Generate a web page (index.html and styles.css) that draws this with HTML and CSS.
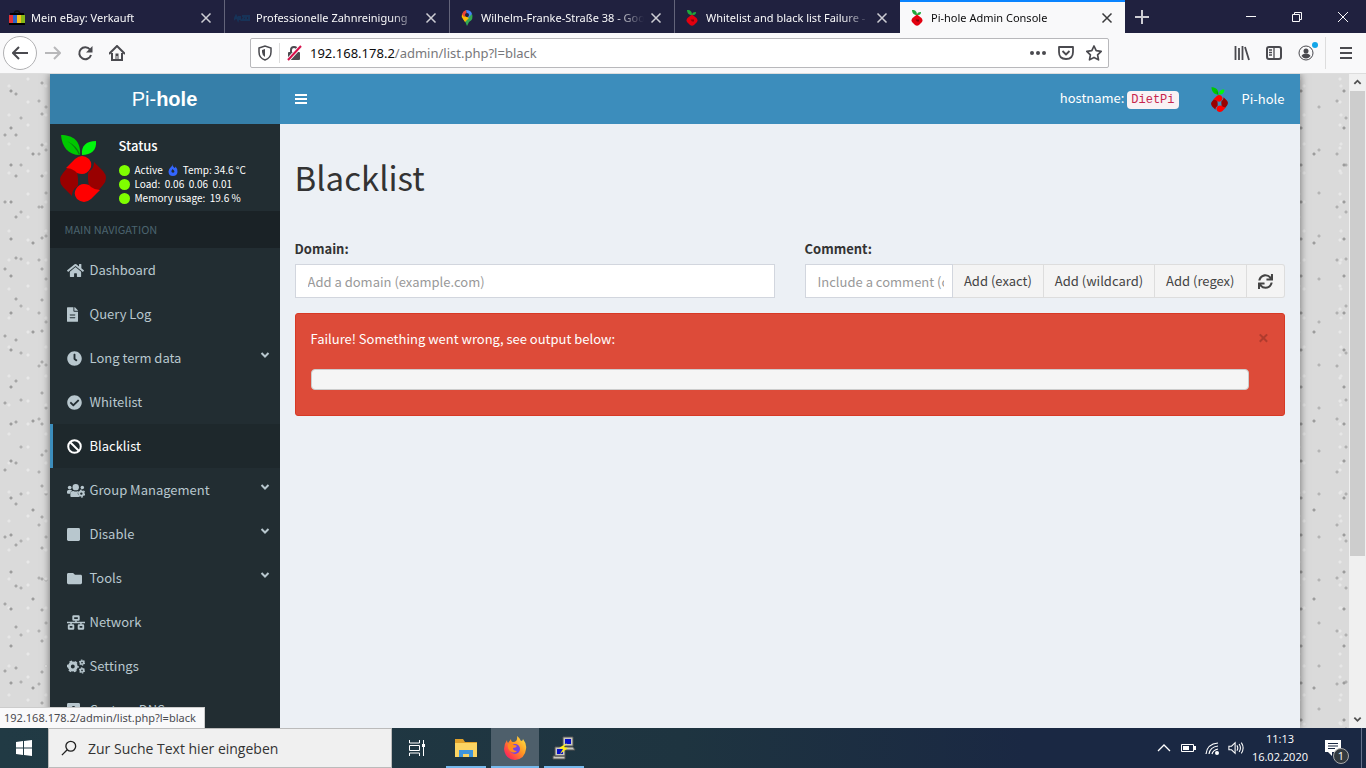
FILE: index.html
```
<!DOCTYPE html>
<html lang="en">
<head>
    <meta charset="UTF-8">
    <meta name="viewport" content="width=device-width, initial-scale=1.0">
    <title>Pi-hole Admin Console</title>
    <link rel="stylesheet" href="styles.css">
</head>
<body>
    <!-- icon sprite -->
    <svg class="sprite" aria-hidden="true">
        <symbol id="pihole" viewBox="0 0 46 68">
            <path fill="#00c800" d="M1 1C13 1 21 7 20 21C8 21 2 13 1 1z"/>
            <path fill="#0a7a12" d="M7 7Q15 12 19 21L20 20Q17 12 7 7z"/>
            <path fill="#00f50c" d="M36 7C37 16 31 21 22 21C21 12 26 7 36 7z"/>
            <g transform="translate(23 45)">
                <path fill="#990000" d="M-11 17L-20 8Q-26 1 -20 -6L-15 -12L-6 -8L-5 0L-5 5Q-5 8 -8 9Q-11 12 -11 17z"/>
                <path fill="#990000" d="M-11 17L-20 8Q-26 1 -20 -6L-15 -12L-6 -8L-5 0L-5 5Q-5 8 -8 9Q-11 12 -11 17z" transform="rotate(180)"/>
                <path fill="#ff0000" d="M-17 -11L-8 -20Q-1 -26 6 -20Q10 -15 7 -10Q4 -5 -1 -5Q-6 -5 -8 -8Q-12 -11 -17 -11z"/>
                <path fill="#ff0000" d="M-17 -11L-8 -20Q-1 -26 6 -20Q10 -15 7 -10Q4 -5 -1 -5Q-6 -5 -8 -8Q-12 -11 -17 -11z" transform="rotate(180)"/>
            </g>
        </symbol>
        <symbol id="pihole-small" viewBox="0 0 16 16">
            <path fill="#1fa83a" d="M3 0C7 0 8 2 8 5C5 5 3 3 3 0zM12 2C12 5 10 5 8 5C8 3 9 2 12 2z"/>
            <path fill="#e3000f" d="M8 4.500L12.500 8Q14.500 10.500 12.500 12.500L10 15Q8 16.500 6 15L3.500 12.500Q1.500 10.500 3.500 8z"/>
            <path fill="#8a0008" d="M6.500 9.500h3.500v2H8z"/>
        </symbol>
        <symbol id="close" viewBox="0 0 12 12"><path d="M1.500 1.500l9 9M10.500 1.500l-9 9" fill="none" stroke="currentColor" stroke-width="1.500"/></symbol>
        <symbol id="chevron" viewBox="0 0 10 10"><path d="M1.500 3l3.500 3.500L8.500 3" fill="none" stroke="currentColor" stroke-width="2"/></symbol>
        <symbol id="home" viewBox="0 0 576 512"><path fill="currentColor" d="M280.37 148.26L96 300.11V464a16 16 0 0 0 16 16l112.06-.29a16 16 0 0 0 15.92-16V368a16 16 0 0 1 16-16h64a16 16 0 0 1 16 16v95.64a16 16 0 0 0 16 16.05L464 480a16 16 0 0 0 16-16V300L295.67 148.26a12.19 12.19 0 0 0-15.3 0zM571.6 251.47L488 182.56V44.05a12 12 0 0 0-12-12h-56a12 12 0 0 0-12 12v72.61L318.47 43a48 48 0 0 0-61 0L4.34 251.47a12 12 0 0 0-1.6 16.9l25.5 31A12 12 0 0 0 45.15 301l235.22-193.74a12.19 12.19 0 0 1 15.3 0L530.9 301a12 12 0 0 0 16.9-1.6l25.5-31a12 12 0 0 0-1.700-16.93z"/></symbol>
        <symbol id="file" viewBox="0 0 384 512"><path fill="currentColor" d="M224 136V0H24C10.700 0 0 10.700 0 24v464c0 13.300 10.700 24 24 24h336c13.300 0 24-10.700 24-24V160H248c-13.200 0-24-10.800-24-24zm64 236c0 6.600-5.400 12-12 12H108c-6.600 0-12-5.400-12-12v-8c0-6.600 5.400-12 12-12h168c6.600 0 12 5.400 12 12v8zm0-96c0 6.600-5.400 12-12 12H108c-6.600 0-12-5.400-12-12v-8c0-6.600 5.400-12 12-12h168c6.600 0 12 5.400 12 12v8zM384 122v6H256V0h6c6.400 0 12.500 2.500 17 7l98 98c4.500 4.500 7 10.600 7 17z"/></symbol>
        <symbol id="clock" viewBox="0 0 512 512"><path fill="currentColor" d="M256,8C119,8,8,119,8,256S119,504,256,504,504,393,504,256,393,8,256,8Zm92.49,313h0l-20,25a16,16,0,0,1-22.49,2.500h0l-67-49.720a40,40,0,0,1-15-31.230V112a16,16,0,0,1,16-16h32a16,16,0,0,1,16,16V256l58,42.500A16,16,0,0,1,348.490,321Z"/></symbol>
        <symbol id="check" viewBox="0 0 512 512"><path fill="currentColor" d="M504 256c0 136.967-111.033 248-248 248S8 392.967 8 256 119.033 8 256 8s248 111.033 248 248zM227.314 387.314l184-184c6.248-6.248 6.248-16.379 0-22.627l-22.627-22.627c-6.248-6.249-16.379-6.249-22.628 0L216 308.118l-70.059-70.059c-6.248-6.248-16.379-6.248-22.628 0l-22.627 22.627c-6.248 6.248-6.248 16.379 0 22.627l104 104c6.249 6.249 16.379 6.249 22.628.001z"/></symbol>
        <symbol id="ban" viewBox="0 0 512 512"><g fill="none" stroke="currentColor" stroke-width="68"><circle cx="256" cy="256" r="214"/><path d="M110 110l292 292"/></g></symbol>
        <symbol id="users" viewBox="0 0 640 512">
            <g fill="currentColor"><circle cx="96" cy="150" r="66"/><circle cx="544" cy="150" r="62"/><circle cx="310" cy="136" r="114"/>
            <path d="M0 340v-50q0-56 56-56h84q30 0 46 18q-70 30-78 120H32q-32 0-32-32zM120 448v-70q0-100 106-108q86 36 172 0q-50 90 4 160l40 60H176q-56 0-56-42z"/></g>
            <circle cx="510" cy="366" r="76" fill="none" stroke="currentColor" stroke-width="66"/>
            <circle cx="510" cy="366" r="122" fill="none" stroke="currentColor" stroke-width="44" stroke-dasharray="66 61"/>
        </symbol>
        <symbol id="square" viewBox="0 0 448 512"><rect y="32" width="448" height="448" rx="48" fill="currentColor"/></symbol>
        <symbol id="folder" viewBox="0 0 512 512"><path fill="currentColor" d="M464 128H272l-64-64H48C21.490 64 0 85.490 0 112v288c0 26.510 21.490 48 48 48h416c26.510 0 48-21.490 48-48V176c0-26.510-21.490-48-48-48z"/></symbol>
        <symbol id="network" viewBox="0 0 640 512"><g fill="none" stroke="currentColor" stroke-width="66"><rect x="222" y="33" width="196" height="130" rx="10"/><rect x="62" y="350" width="164" height="128" rx="10"/><rect x="414" y="350" width="164" height="128" rx="10"/></g><path fill="none" stroke="currentColor" stroke-width="56" d="M0 256h640M320 176v80M144 256v80M496 256v80"/></symbol>
        <symbol id="cogs" viewBox="0 0 640 512">
            <g fill="none" stroke="currentColor"><circle cx="206" cy="256" r="122" stroke-width="104"/><circle cx="206" cy="256" r="184" stroke-width="56" stroke-dasharray="96 96.700" stroke-dashoffset="48"/>
            <circle cx="534" cy="116" r="58" stroke-width="56"/><circle cx="534" cy="116" r="92" stroke-width="36" stroke-dasharray="52 44"/>
            <circle cx="534" cy="396" r="58" stroke-width="56"/><circle cx="534" cy="396" r="92" stroke-width="36" stroke-dasharray="52 44"/></g>
        </symbol>
        <symbol id="book" viewBox="0 0 448 512"><path fill="currentColor" fill-rule="evenodd" d="M48 0h352q48 0 48 48v416q0 48-48 48H48q-48 0-48-48V48Q0 0 48 0zM224 100a70 70 0 1 0 1 0zM100 370q0-80 70-80h108q70 0 70 80z"/></symbol>
        <symbol id="sync" viewBox="0 0 512 512"><path fill="currentColor" d="M440.650 12.570l4 82.770A247.160 247.160 0 0 0 255.830 8C134.730 8 33.910 94.920 12.290 209.820A12 12 0 0 0 24.090 224h49.050a12 12 0 0 0 11.670-9.260 175.910 175.910 0 0 1 317-56.940l-101.460-4.860a12 12 0 0 0-12.570 12v47.410a12 12 0 0 0 12 12H500a12 12 0 0 0 12-12V12a12 12 0 0 0-12-12h-47.370a12 12 0 0 0-11.980 12.570zM255.830 432a175.610 175.610 0 0 1-146-77.800l101.800 4.870a12 12 0 0 0 12.570-12v-47.400a12 12 0 0 0-12-12H12a12 12 0 0 0-12 12V500a12 12 0 0 0 12 12h47.350a12 12 0 0 0 12-12.600l-4.150-82.570A247.170 247.170 0 0 0 255.830 504c121.110 0 221.930-86.920 243.550-201.820a12 12 0 0 0-11.800-14.180h-49.050a12 12 0 0 0-11.670 9.260A175.860 175.860 0 0 1 255.830 432z"/></symbol>
        <symbol id="flame" viewBox="0 0 10 12"><path fill="#3366ff" fill-rule="evenodd" d="M4.500 0Q4 2 6.500 4Q7.500 3.500 7.500 2.500Q10 5 9.500 8Q9 12 5 12Q.5 12 .5 7.500Q.5 5 3 3Q4.500 2 4.500 0zM4.500 5Q3 7 3.500 8Q5 9.500 6.500 8Q6.500 6.500 4.500 5z"/></symbol>
    </svg>

    <header class="tabs">
        <div class="tab">
            <svg class="favicon" viewBox="0 0 16 16"><path fill="none" stroke="#111" stroke-width="1.500" d="M5 5Q5 1 8 1T11 5"/><path fill="#000" d="M1 3h14v3H1z"/><path fill="#e43137" d="M0 5h4v8H0z"/><path fill="#2b63c6" d="M4 5h4v8H4z"/><path fill="#f4c21f" d="M8 5h4v8H8z"/><path fill="#86b817" d="M12 5h4v8h-4z"/><path d="M0 13h16v2H0z"/></svg>
            <span class="tab-title">Mein eBay: Verkauft</span>
            <button class="tab-close" aria-label="Close tab"><svg><use href="#close"/></svg></button>
        </div>
        <div class="tab">
            <svg class="favicon" viewBox="0 0 16 16"><path fill="none" stroke="#173358" stroke-width="2" d="M0 10l2-4l2 4l1-4M6 6v4M8 6h3l-3 4h3M12 6h3v4h-3z"/></svg>
            <span class="tab-title">Professionelle Zahnreinigung</span>
            <button class="tab-close" aria-label="Close tab"><svg><use href="#close"/></svg></button>
        </div>
        <div class="tab">
            <svg class="favicon" viewBox="0 0 16 16"><path fill="#34a853" d="M8 16Q7 12 4 9L13 4Q15 9 10 12Q9 14 8 16z"/><path fill="#fbbc04" d="M4 9Q2 7 3 4L10 8L6 12z"/><path fill="#ea4335" d="M3 4Q4 1 7 0L8 5L5 7z"/><path fill="#4285f4" d="M7 0Q12 0 13 4L9 8z"/><circle cx="8" cy="5" r="2" fill="#20213f"/></svg>
            <span class="tab-title">Wilhelm-Franke-Straße 38 - Goo</span>
            <button class="tab-close" aria-label="Close tab"><svg><use href="#close"/></svg></button>
        </div>
        <div class="tab">
            <svg class="favicon"><use href="#pihole-small"/></svg>
            <span class="tab-title">Whitelist and black list Failure -</span>
            <button class="tab-close" aria-label="Close tab"><svg><use href="#close"/></svg></button>
        </div>
        <div class="tab active">
            <svg class="favicon"><use href="#pihole-small"/></svg>
            <span class="tab-title">Pi-hole Admin Console</span>
            <button class="tab-close" aria-label="Close tab"><svg><use href="#close"/></svg></button>
        </div>
        <button class="new-tab" aria-label="New tab"><svg viewBox="0 0 14 14"><path d="M7 0v14M0 7h14" stroke="currentColor" stroke-width="2"/></svg></button>
        <div class="window-controls">
            <button aria-label="Minimize"><svg viewBox="0 0 12 12"><path d="M1 5.500h10" stroke="currentColor"/></svg></button>
            <button aria-label="Restore"><svg viewBox="0 0 12 12"><path d="M1.500 3.500h7v7h-7zM3.500 3.500v-2h7v7h-2" fill="none" stroke="currentColor"/></svg></button>
            <button aria-label="Close window"><svg viewBox="0 0 12 12"><path d="M1 1l10 10M11 1L1 11" stroke="currentColor"/></svg></button>
        </div>
    </header>

    <div class="toolbar">
        <div class="nav-buttons">
            <button class="back" aria-label="Back"><svg viewBox="0 0 16 16"><path d="M16 8H1M7 2L1 8l6 6" fill="none" stroke="currentColor" stroke-width="2"/></svg></button>
            <button class="forward" aria-label="Forward"><svg viewBox="0 0 16 16"><path d="M0 8h15M9 2l6 6l-6 6" fill="none" stroke="currentColor" stroke-width="2"/></svg></button>
            <button aria-label="Reload"><svg viewBox="0 0 16 16"><path d="M13 4.500A6 6 0 1 0 14 10" fill="none" stroke="currentColor" stroke-width="2"/><path d="M15.500 1v6.500H9z" fill="currentColor"/></svg></button>
            <button aria-label="Home"><svg viewBox="0 0 16 16"><path d="M0 9l8-8l8 8M3 8v7h10V8" fill="none" stroke="currentColor" stroke-width="2"/><path d="M6.500 8.500h3V15H8.500v-4h-1v4h-1z" fill="currentColor"/></svg></button>
        </div>
        <div class="url-bar">
            <svg viewBox="0 0 16 16"><path d="M2 3l6-2l6 2v4q0 6-6 8q-6-2-6-8z" fill="none" stroke="currentColor" stroke-width="1.500"/><path d="M8 4v8q-3-2-3-5V5z" fill="currentColor"/></svg>
            <span class="url-divider"></span>
            <svg viewBox="0 0 16 16"><path d="M5 8V5q0-3 3-3t3 3v3" fill="none" stroke="currentColor" stroke-width="2"/><path fill="currentColor" d="M3 7h10q1 0 1 1v6q0 1-1 1H3q-1 0-1-1V8q0-1 1-1z"/><path d="M2 15L15 1" stroke="#f9f9fa" stroke-width="4"/><path d="M2 15L15 1" stroke="#d70f4a" stroke-width="2"/></svg>
            <a class="url" href="#"><b>192.168.178.2</b>/admin/list.php?l=black</a>
            <div class="page-actions">
                <button aria-label="Page actions"><svg viewBox="0 0 16 16" fill="currentColor"><circle cx="2" cy="8" r="2"/><circle cx="8" cy="8" r="2"/><circle cx="14" cy="8" r="2"/></svg></button>
                <button aria-label="Save to Pocket"><svg viewBox="0 0 16 16"><path d="M1 2h14v5q0 7-7 7t-7-7zM4.500 6L8 9.500L11.500 6" fill="none" stroke="currentColor" stroke-width="1.800" stroke-linejoin="round"/></svg></button>
                <button aria-label="Bookmark"><svg viewBox="0 0 16 16"><path d="M8 1l2.200 4.600l5 .7l-3.600 3.500l.9 5L8 12.400l-4.500 2.400l.9-5L.8 6.300l5-.7z" fill="none" stroke="currentColor" stroke-width="1.700" stroke-linejoin="round"/></svg></button>
            </div>
        </div>
        <div class="browser-menu">
            <button aria-label="Library"><svg viewBox="0 0 16 16"><path d="M1.500 1v14M5 3v12M8.500 1v14M11 2l4 13" fill="none" stroke="currentColor" stroke-width="1.800"/></svg></button>
            <button aria-label="Sidebars"><svg viewBox="0 0 16 16"><rect x="1" y="2" width="14" height="12" rx="2" fill="none" stroke="currentColor" stroke-width="2"/><path d="M8 2v12M3 5h3M3 7.500h3M3 10h3" stroke="currentColor" stroke-width="1.300"/></svg></button>
            <button class="account" aria-label="Account"><svg viewBox="0 0 16 16"><circle cx="8" cy="8" r="7" fill="none" stroke="currentColor"/><circle cx="8" cy="6" r="2.500" fill="currentColor"/><path fill="currentColor" d="M3.500 11q1-2.500 4.500-2.500t4.500 2.500q-2 2.500-4.500 2.500T3.500 11z"/></svg></button>
            <button class="hamburger" aria-label="Menu"><svg viewBox="0 0 16 16"><path d="M2 3h12M2 8h12M2 13h12" stroke="currentColor" stroke-width="2"/></svg></button>
        </div>
    </div>

    <div class="viewport">
        <div class="page">
            <div class="wrapper">
                <aside class="sidebar">
                    <a class="logo" href="#">Pi-<b>hole</b></a>
                    <div class="user-panel">
                        <svg class="panel-logo"><use href="#pihole"/></svg>
                        <div class="info">
                            <p>Status</p>
                            <div class="stat"><i class="dot"></i>Active <svg class="flame"><use href="#flame"/></svg> Temp: 34.6 °C</div>
                            <div class="stat"><i class="dot"></i>Load:&nbsp; 0.06&nbsp; 0.06&nbsp; 0.01</div>
                            <div class="stat"><i class="dot"></i>Memory usage:&nbsp; 19.6 %</div>
                        </div>
                    </div>
                    <div class="nav-header">MAIN NAVIGATION</div>
                    <nav class="menu">
                        <a href="#"><span class="icon"><svg class="wide"><use href="#home"/></svg></span>Dashboard</a>
                        <a href="#"><span class="icon"><svg class="narrow"><use href="#file"/></svg></span>Query Log</a>
                        <a href="#"><span class="icon"><svg><use href="#clock"/></svg></span>Long term data<svg class="arrow"><use href="#chevron"/></svg></a>
                        <a href="#"><span class="icon"><svg><use href="#check"/></svg></span>Whitelist</a>
                        <a class="active" href="#"><span class="icon"><svg><use href="#ban"/></svg></span>Blacklist</a>
                        <a href="#"><span class="icon"><svg class="wider"><use href="#users"/></svg></span>Group Management<svg class="arrow"><use href="#chevron"/></svg></a>
                        <a href="#"><span class="icon"><svg class="square"><use href="#square"/></svg></span>Disable<svg class="arrow"><use href="#chevron"/></svg></a>
                        <a href="#"><span class="icon"><svg><use href="#folder"/></svg></span>Tools<svg class="arrow"><use href="#chevron"/></svg></a>
                        <a href="#"><span class="icon"><svg class="wider"><use href="#network"/></svg></span>Network</a>
                        <a href="#"><span class="icon"><svg class="wider"><use href="#cogs"/></svg></span>Settings</a>
                        <a href="#"><span class="icon"><svg class="square"><use href="#book"/></svg></span>Custom DNS</a>
                    </nav>
                </aside>
                <main class="main">
                    <div class="navbar">
                        <button class="toggle" aria-label="Toggle navigation"><svg viewBox="0 0 12 12"><path d="M0 2h12M0 6h12M0 10h12" stroke="currentColor" stroke-width="2"/></svg></button>
                        <div class="hostname">hostname: <code>DietPi</code></div>
                        <a class="user" href="#"><svg><use href="#pihole"/></svg>Pi-hole</a>
                    </div>
                    <section class="content">
                        <h1>Blacklist</h1>
                        <form class="row">
                            <div class="field">
                                <label for="domain">Domain:</label>
                                <input id="domain" type="text" placeholder="Add a domain (example.com)">
                            </div>
                            <div class="field">
                                <label for="comment">Comment:</label>
                                <div class="input-group">
                                    <input id="comment" type="text" placeholder="Include a comment (optional)">
                                    <button type="button">Add (exact)</button>
                                    <button type="button">Add (wildcard)</button>
                                    <button type="button">Add (regex)</button>
                                    <button class="refresh" type="button" aria-label="Refresh"><svg><use href="#sync"/></svg></button>
                                </div>
                            </div>
                        </form>
                        <div class="alert">
                            <div class="alert-body">
                                <span>Failure! Something went wrong, see output below:</span>
                                <pre></pre>
                            </div>
                            <button class="alert-close" aria-label="Close">×</button>
                        </div>
                    </section>
                </main>
            </div>
        </div>
        <div class="scrollbar">
            <svg viewBox="0 0 10 10"><path d="M1.500 6.500L5 3l3.500 3.500" fill="none" stroke="currentColor" stroke-width="2"/></svg>
            <div class="track"><div class="thumb"></div></div>
            <svg><use href="#chevron"/></svg>
        </div>
        <div class="status-bubble">192.168.178.2/admin/list.php?l=black</div>
    </div>

    <footer class="taskbar">
        <button class="start" aria-label="Start"><svg viewBox="0 0 16 16" fill="#fff"><path d="M0 2l7-1v6.500H0zM8 1l8-1v7.500H8zM0 8.500h7V15l-7-1zM8 8.500h8V16l-8-1z"/></svg></button>
        <label class="search">
            <svg viewBox="0 0 18 18"><path d="M1 17l6-6" stroke="currentColor" stroke-width="1.500"/><circle cx="11" cy="7" r="5.500" fill="none" stroke="currentColor" stroke-width="1.500"/></svg>
            <input type="text" placeholder="Zur Suche Text hier eingeben" aria-label="Suche">
        </label>
        <button class="task" aria-label="Task view"><svg viewBox="0 0 24 24"><path d="M4.500 4v3h10V4M4.500 20v-3h10v3M4.500 9.500h10v5h-10zM18.500 4v16" fill="none" stroke="#fff"/><path fill="#fff" d="M17 8h3v3h-3z"/></svg></button>
        <button class="task open" aria-label="Explorer"><svg viewBox="0 0 24 24"><path fill="#e0a12a" d="M1 3h8l2 3h12v15H1z"/><path fill="#fcd462" d="M1 7h22v14H1z"/><path fill="#3f95dc" d="M5 21v-7h14v7h-4v-3H9v3z"/></svg></button>
        <button class="task open current" aria-label="Firefox"><svg viewBox="0 0 24 24">
            <defs><linearGradient id="fox" x1="1" y1="0" x2="0" y2="1"><stop offset="0" stop-color="#fff04a"/><stop offset=".45" stop-color="#ff9422"/><stop offset=".8" stop-color="#ff3350"/><stop offset="1" stop-color="#e4188c"/></linearGradient></defs>
            <path fill="url(#fox)" d="M14 0q3 2 4 5q2 0 2-2q4 5 3 10q-1 10-11 11Q2 23 1 13q0-5 3-9q0 2 1 3l3-4q0 3 2 3q5 0 4-6z"/><circle cx="12" cy="13" r="5" fill="#7542e5"/><path fill="#ff8a1f" d="M5 8q4-1 6 1q2 0 3 1q-1 2-4 2q0 3 4 3q-3 3-7 0q-3-3-2-7z"/></svg></button>
        <button class="task open" aria-label="PuTTY"><svg viewBox="0 0 24 24"><path fill="#c9c9c0" stroke="#555" d="M11 1h10v9H11zM10 11h11l2 3H12zM3 11h10v9H3zM1 20h12v3H1z"/><path fill="#0710c8" d="M13 3h6v5h-6zM5 13h6v5H5z"/><path fill="#ffec1c" d="M15 7l-8 5l4 1l-3 5l8-6l-4-1z"/></svg></button>
        <div class="tray">
            <svg viewBox="0 0 16 16"><path d="M2 11l6-6l6 6" fill="none" stroke="currentColor" stroke-width="1.300"/></svg>
            <svg viewBox="0 0 16 16"><path d="M1.500 4.500h12v7h-12z" fill="none" stroke="currentColor"/><path fill="currentColor" d="M3 6h6v4H3zM14 6h2v4h-2z"/></svg>
            <svg viewBox="0 0 16 16"><g fill="none" stroke="currentColor" stroke-width="1.200"><path d="M2 14Q3 4 14 3M5 14Q6 7 14 6M8 14q1-4 6-5" /></g><circle cx="13" cy="13" r="2" fill="currentColor"/></svg>
            <svg viewBox="0 0 18 16"><path d="M1 6h3l4-4v12l-4-4H1zM10 5q2 3 0 6M12.500 3.500q3 4.500 0 9M15 2q4 6 0 12" fill="none" stroke="currentColor" stroke-width="1.200"/></svg>
            <div class="time"><span>11:13</span><span>16.02.2020</span></div>
            <div class="notifications"><svg viewBox="0 0 16 16"><path fill="#fff" d="M0 0h16v12H7v4l-4-4H0z"/><path d="M3 3.500h10M3 6h10M3 8.500h7" stroke="#1a2843"/></svg><span class="badge">1</span></div>
        </div>
    </footer>
</body>
</html>
```

FILE: styles.css
```
* {
    box-sizing: border-box;
}

body {
    margin: 0;
    height: 100vh;
    display: flex;
    flex-direction: column;
    overflow: hidden;
    font-family: 'Noto Sans', sans-serif;
    font-size: 11px;
    color: #333;
}

button {
    display: flex;
    align-items: center;
    justify-content: center;
    padding: 0;
    border: none;
    background: none;
    color: inherit;
    font: inherit;
    cursor: pointer;
}

a {
    color: inherit;
    text-decoration: none;
}

svg {
    width: 16px;
    height: 16px;
    flex-shrink: 0;
}

.sprite {
    position: absolute;
    width: 0;
    height: 0;
}

/* tab strip */
.tabs {
    flex: 0 0 33px;
    display: flex;
    background: #20213f;
    color: #f9f9fa;
}

.tab {
    flex: 0 1 225px;
    min-width: 0;
    display: flex;
    align-items: center;
    gap: 6px;
    padding: 2px 12px 0 9px;
    border-right: 1px solid #63647a;
}

.tab:nth-child(4) {
    border-right: none;
}

.tab.active {
    background: #f9f9fa;
    color: #0c0c0d;
    border-right: none;
    border-top: 2px solid #0a84ff;
    padding-top: 0;
}

.tab-title {
    flex: 1;
    overflow: hidden;
    white-space: nowrap;
    mask-image: linear-gradient(to left, transparent, #000 28px);
}

.tab-close svg {
    width: 12px;
    height: 12px;
    opacity: 0.8;
}

.new-tab {
    width: 34px;
}

.new-tab svg {
    width: 14px;
    height: 14px;
    opacity: 0.8;
}

.window-controls {
    display: flex;
    margin-left: auto;
}

.window-controls button {
    width: 46px;
}

.window-controls svg {
    width: 12px;
    height: 12px;
}

/* toolbar */
.toolbar {
    flex: 0 0 41px;
    display: flex;
    align-items: center;
    background: #f9f9fa;
    border-bottom: 1px solid #ddd;
    color: #4a4a4f;
}

.nav-buttons {
    flex: 0 0 250px;
    display: flex;
    align-items: center;
    padding-left: 3px;
}

.nav-buttons button {
    width: 32px;
    height: 34px;
}

.nav-buttons .back {
    width: 34px;
    border: 1px solid #b1b1b3;
    border-radius: 50%;
    background: #fff;
}

.nav-buttons .forward {
    color: #b8b8ba;
}

.url-bar {
    flex: 1;
    height: 30px;
    display: flex;
    align-items: center;
    padding: 0 6px;
    background: #fff;
    border: 1px solid #b8b8bb;
    border-radius: 2px;
}

.url-divider {
    width: 1px;
    height: 20px;
    margin: 0 6px;
    background: #ddd;
}

.url {
    margin-left: 8px;
    font-size: 13px;
    color: #77777b;
}

.url b {
    font-weight: normal;
    color: #0c0c0d;
}

.page-actions {
    display: flex;
    gap: 12px;
    margin-left: auto;
}

.browser-menu {
    flex: 0 0 257px;
    display: flex;
    justify-content: flex-end;
}

.browser-menu button {
    width: 32px;
    height: 32px;
}

.account {
    position: relative;
}

.account::after {
    content: "";
    position: absolute;
    top: 5px;
    right: 4px;
    width: 6px;
    height: 6px;
    border-radius: 50%;
    background: #12a5e8;
}

.browser-menu .hamburger {
    width: 41px;
    margin-left: 3px;
    border-left: 1px solid #ddd;
}

/* page */
.viewport {
    flex: 1;
    min-height: 0;
    display: flex;
    position: relative;
}

.page {
    flex: 1;
    overflow: hidden;
    background-color: #dadada;
    background-image:
        radial-gradient(circle at 11px 17px, #9c9c9c 1px, transparent 2px),
        radial-gradient(circle at 5px 61px, #a6a6a6 1px, transparent 2px),
        radial-gradient(circle at 39px 27px, #b0b0b0 1px, transparent 2px),
        radial-gradient(circle at 9px 12px, #e6e6e6 1px, transparent 2px),
        radial-gradient(circle at 33px 80px, #9c9c9c 1px, transparent 2px),
        radial-gradient(circle at 42px 9px, #aaa 1px, transparent 2px),
        radial-gradient(circle at 21px 44px, #b0b0b0 1px, transparent 2px),
        radial-gradient(circle at 28px 5px, #e8e8e8 1px, transparent 2px),
        radial-gradient(circle at 16px 20px, #a6a6a6 1px, transparent 2px),
        radial-gradient(circle at 46px 33px, #b4b4b4 1px, transparent 2px);
    background-size: 43px 37px, 71px 67px, 59px 53px, 37px 29px, 61px 89px, 83px 31px, 53px 47px, 41px 23px, 97px 41px, 67px 43px;
    font-family: 'Noto Sans CJK SC', sans-serif;
    font-size: 13px;
    line-height: 20px;
}

.wrapper {
    display: flex;
    max-width: 1250px;
    height: 100%;
    margin: 0 auto;
    background: #ecf0f5;
    box-shadow: 0 0 8px rgba(0, 0, 0, 0.5);
}

.sidebar {
    flex: 0 0 230px;
    overflow: hidden;
    background: #222d32;
    color: #b8c7ce;
}

.logo {
    display: block;
    background: #367fa9;
    color: #fff;
    font-family: 'Liberation Sans', Arial, sans-serif;
    font-size: 20px;
    line-height: 50px;
    text-align: center;
}

.user-panel {
    display: flex;
    gap: 13px;
    height: 87px;
    padding: 10px;
    color: #fff;
}

.panel-logo {
    width: 46px;
    height: 68px;
}

.info p {
    margin: 2px 0 7px;
    font-weight: 500;
}

.stat {
    display: flex;
    align-items: center;
    gap: 5px;
    font-size: 10px;
    line-height: 14px;
    white-space: nowrap;
}

.dot {
    width: 11px;
    height: 11px;
    border-radius: 50%;
    background: #7fff00;
}

.flame {
    width: 10px;
    height: 12px;
}

.nav-header {
    padding: 8px 15px 9px;
    background: #1a2226;
    color: #4b646f;
    font-size: 11px;
}

.menu a {
    display: flex;
    align-items: center;
    height: 44px;
    padding: 0 10px 0 14px;
    border-left: 3px solid transparent;
}

.menu .active {
    background: #1e282c;
    border-left-color: #3c8dbc;
    color: #fff;
}

.icon {
    flex: 0 0 23px;
    display: flex;
}

.icon svg {
    width: 15px;
    height: 15px;
}

.icon .narrow {
    width: 11px;
}

.icon .square {
    width: 13px;
}

.icon .wide {
    width: 17px;
}

.icon .wider {
    width: 18px;
}

.arrow {
    width: 10px;
    height: 10px;
    margin: 0 0 6px auto;
}

.main {
    flex: 1;
    min-width: 0;
}

.navbar {
    display: flex;
    align-items: center;
    height: 50px;
    padding: 0 15px;
    background: #3c8dbc;
    color: #fff;
}

.toggle svg {
    width: 12px;
    height: 12px;
}

.hostname {
    margin-left: auto;
}

code {
    padding: 2px 4px;
    border-radius: 4px;
    background: #f9f2f4;
    color: #c7254e;
    font-family: 'Liberation Mono', monospace;
    font-size: 12px;
}

.user {
    display: flex;
    align-items: center;
    gap: 10px;
    margin-left: 28px;
}

.user svg {
    width: 25px;
    height: 25px;
}

.content {
    padding: 15px;
}

h1 {
    margin: 18px 0 42px;
    font-size: 33px;
    font-weight: normal;
    line-height: 40px;
}

.row {
    display: grid;
    grid-template-columns: 1fr 1fr;
    gap: 30px;
}

.field {
    min-width: 0;
}

.field label {
    display: block;
    margin-bottom: 5px;
    font-weight: bold;
}

.field input {
    width: 100%;
    min-width: 0;
    height: 34px;
    padding: 0 12px;
    border: 1px solid #d2d6de;
    background: #fff;
    font: inherit;
}

.field input::placeholder {
    color: #999;
    opacity: 1;
}

.input-group {
    display: flex;
}

.input-group input {
    flex: 1;
    width: 0;
    padding-right: 8px;
}

.input-group button {
    height: 34px;
    padding: 0 11px;
    border: 1px solid #ddd;
    border-left: none;
    background: #f4f4f4;
    color: #444;
    white-space: nowrap;
}

.input-group .refresh {
    border-radius: 0 3px 3px 0;
}

.input-group svg {
    width: 15px;
    height: 15px;
}

.alert {
    display: flex;
    gap: 10px;
    margin-top: 15px;
    padding: 15px;
    border: 1px solid #d73925;
    border-radius: 3px;
    background: #dd4b39;
    color: #fff;
}

.alert-body {
    flex: 1;
}

pre {
    height: 21px;
    margin: 20px 0 10px;
    border: 1px solid #ccc;
    border-radius: 4px;
    background: #f5f5f5;
}

.alert-close {
    width: 10px;
    height: 18px;
    color: #000;
    font-family: 'Noto Sans', sans-serif;
    font-size: 20px;
    font-weight: bold;
    opacity: 0.2;
}

.scrollbar {
    flex: 0 0 17px;
    display: flex;
    flex-direction: column;
    align-items: center;
    background: #f0f0f0;
    color: #505050;
}

.scrollbar svg {
    width: 9px;
    height: 17px;
}

.track {
    flex: 1;
    width: 15px;
}

.thumb {
    height: 75%;
    background: #cdcdcd;
}

.status-bubble {
    position: absolute;
    left: 0;
    bottom: 0;
    padding: 2px 8px 2px 4px;
    border: solid #ccc;
    border-width: 1px 1px 0 0;
    background: #f9f9fa;
    color: #4a4a4f;
    line-height: 16px;
}

/* taskbar */
.taskbar {
    flex: 0 0 40px;
    display: flex;
    background: linear-gradient(to right, #213a44, #1e3440 50%, #1a2843 75%);
    color: #fff;
    font-family: 'Open Sans', sans-serif;
}

.start {
    width: 48px;
}

.search {
    flex: 0 1 344px;
    display: flex;
    align-items: center;
    gap: 9px;
    padding: 0 12px;
    background: #f0f0f0;
    border: 1px solid #bbb;
    color: #222;
}

.search input {
    flex: 1;
    min-width: 0;
    border: none;
    background: none;
    font: inherit;
    font-size: 14px;
}

.search input::placeholder {
    color: #333;
    opacity: 1;
}

.task {
    width: 48px;
    margin-left: 1px;
    position: relative;
}

.task svg {
    width: 24px;
    height: 24px;
}

.task.open::after {
    content: "";
    position: absolute;
    left: 4px;
    right: 4px;
    bottom: 0;
    height: 2px;
    background: #76b9ed;
}

.task.current {
    background: #4e5f6b;
}

.task.current::after {
    left: 0;
    right: 0;
}

.tray {
    display: flex;
    align-items: center;
    gap: 8px;
    margin-left: auto;
    padding-right: 4px;
}

.time {
    display: flex;
    flex-direction: column;
    align-items: center;
    line-height: 18px;
}

.notifications {
    position: relative;
    display: flex;
    align-items: center;
    height: 40px;
    padding: 0 20px 0 9px;
    border-right: 1px solid #66708a;
}

.badge {
    position: absolute;
    right: 12px;
    bottom: 4px;
    width: 16px;
    height: 16px;
    border: 1px solid #aaa;
    border-radius: 50%;
    background: #333a40;
    line-height: 14px;
    text-align: center;
}
```
